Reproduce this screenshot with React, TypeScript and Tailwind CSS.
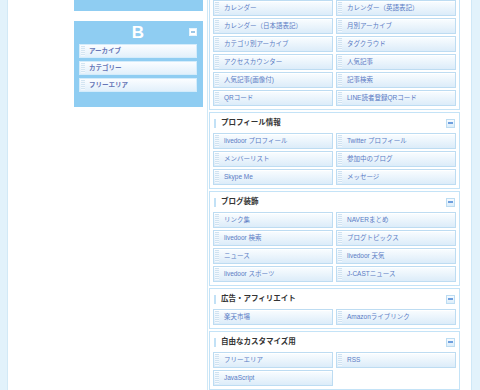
import React from "react";

const FONT = { fontFamily: '"Liberation Sans", "Noto Sans CJK JP", sans-serif' };

function Grip() {
  return (
    <div className="ml-[1px] w-[4px] self-stretch my-[1px] bg-[repeating-linear-gradient(to_bottom,#cfe2f1_0px,#cfe2f1_1px,#f3f8fd_1px,#f3f8fd_2px)]" />
  );
}

function Btn({ label }: { label: string }) {
  return (
    <div className="h-[16px] flex items-center border border-[#bddcf2] bg-linear-to-b from-[#fafdff] to-[#dcecf9] shadow-[inset_0_1px_0_#ffffff]">
      <Grip />
      <span className="ml-[5px] text-[6.5px] leading-none text-[#5a7bc4] whitespace-nowrap">{label}</span>
    </div>
  );
}

function Minus() {
  return (
    <div className="w-[9px] h-[9px] border border-[#bcdcf2] bg-linear-to-b from-[#f6fbff] to-[#dcedf9] flex items-center justify-center">
      <div className="w-[5px] h-[2px] bg-[#6f9fde]" />
    </div>
  );
}

function Section({ title, items, first }: { title?: string; items: string[]; first?: boolean }) {
  return (
    <div className={"border border-[#c4e3f7] bg-white pb-[3px] px-[3px] " + (first ? "border-t-0" : "")}>
      {title && (
        <div className="h-[20px] flex items-center">
          <div className="ml-[1px] w-[2px] h-[9px] bg-[#c2e1f6]" />
          <span className="ml-[5px] text-[7.5px] font-bold text-[#333333] leading-none">{title}</span>
          <div className="ml-auto mr-[1px]">
            <Minus />
          </div>
        </div>
      )}
      <div className="grid grid-cols-2 gap-x-[3px] gap-y-[2px]">
        {items.map((t, i) => (
          <Btn key={i} label={t} />
        ))}
      </div>
    </div>
  );
}

function LeftItem({ label }: { label: string }) {
  return (
    <div className="h-[14px] flex items-center border border-[#d4ecfb] bg-linear-to-b from-[#fbfdff] to-[#e2f0fb]">
      <div className="ml-[1px] w-[4px] self-stretch my-[1px] bg-[repeating-linear-gradient(to_bottom,#d3e5f2_0px,#d3e5f2_1px,#f3f8fd_1px,#f3f8fd_2px)]" />
      <span className="ml-[4px] text-[6.5px] leading-none font-semibold text-[#6675b6]">{label}</span>
    </div>
  );
}

export default function App() {
  const s1 = [
    "カレンダー",
    "カレンダー（英語表記）",
    "カレンダー（日本語表記）",
    "月別アーカイブ",
    "カテゴリ別アーカイブ",
    "タグクラウド",
    "アクセスカウンター",
    "人気記事",
    "人気記事(画像付)",
    "記事検索",
    "QRコード",
    "LINE読者登録QRコード",
  ];
  const s2 = ["livedoor プロフィール", "Twitter プロフィール", "メンバーリスト", "参加中のブログ", "Skype Me", "メッセージ"];
  const s3 = ["リンク集", "NAVERまとめ", "livedoor 検索", "ブログトピックス", "ニュース", "livedoor 天気", "livedoor スポーツ", "J-CASTニュース"];
  const s4 = ["楽天市場", "Amazonライブリンク"];
  const s5 = ["フリーエリア", "RSS", "JavaScript"];

  return (
    <div style={FONT} className="w-[480px] h-[390px] overflow-hidden flex bg-white">
      <div className="w-[8px] h-full bg-[#e2f2fb] border-r border-[#d2e9f6]" />
      <div className="w-[66px]" />
      <div className="w-[129px] flex flex-col">
        <div className="h-[11px] bg-[#8fcdf2]" />
        <div className="h-[10px]" />
        <div className="h-[86px] bg-[#8fcdf2] px-[5px] pr-[6px]">
          <div className="h-[23px] relative flex items-center justify-center">
            <span className="text-[17px] font-bold text-white leading-none">B</span>
            <div className="absolute right-[0px] top-[7px] w-[8px] h-[8px] bg-white border border-[#e6f4fc] flex items-center justify-center">
              <div className="w-[4px] h-[2px] bg-[#9cc7e6]" />
            </div>
          </div>
          <div className="flex flex-col gap-[3px]">
            <LeftItem label="アーカイブ" />
            <LeftItem label="カテゴリー" />
            <LeftItem label="フリーエリア" />
          </div>
        </div>
      </div>
      <div className="w-[4px]" />
      <div className="w-[265px] h-full border-l border-r border-[#cfe8f7] pl-[1px] pr-[11px] flex flex-col gap-[2px]">
        <Section first items={s1} />
        <Section title="プロフィール情報" items={s2} />
        <Section title="ブログ装飾" items={s3} />
        <Section title="広告・アフィリエイト" items={s4} />
        <Section title="自由なカスタマイズ用" items={s5} />
      </div>
      <div className="flex-1 h-full bg-[#e2f2fb]" />
    </div>
  );
}
